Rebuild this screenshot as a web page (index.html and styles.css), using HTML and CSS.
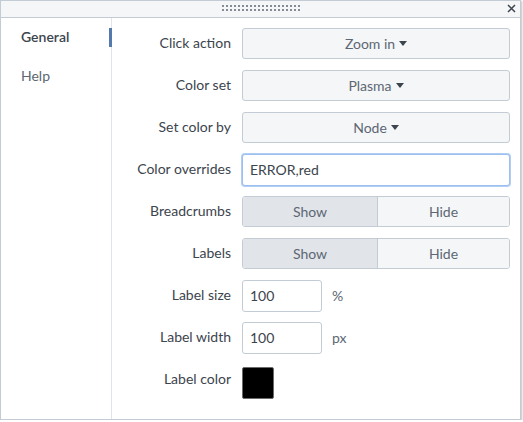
FILE: index.html
```html
<!DOCTYPE html>
<html>
<head>
<meta charset="utf-8">
<link rel="stylesheet" href="styles.css">
</head>
<body>
<div class="panel">
  <div class="header">
    <div class="grip"></div>
    <svg class="close" width="9" height="9" viewBox="0 0 9 9"><path d="M1 1L8 8M8 1L1 8" stroke="#3c444d" stroke-width="1.5" fill="none"/></svg>
  </div>
  <div class="main">
    <nav class="sidebar">
      <div class="nav-item active">General</div>
      <div class="nav-item">Help</div>
    </nav>
    <div class="form">
      <div class="label">Click action</div>
      <div class="control"><button class="dropdown">Zoom in <span class="caret"></span></button></div>

      <div class="label">Color set</div>
      <div class="control"><button class="dropdown">Plasma <span class="caret"></span></button></div>

      <div class="label">Set color by</div>
      <div class="control"><button class="dropdown">Node <span class="caret"></span></button></div>

      <div class="label">Color overrides</div>
      <div class="control"><div class="text-input wide focused">ERROR,red</div></div>

      <div class="label">Breadcrumbs</div>
      <div class="control"><div class="toggle"><span class="opt on">Show</span><span class="opt">Hide</span></div></div>

      <div class="label">Labels</div>
      <div class="control"><div class="toggle"><span class="opt on">Show</span><span class="opt">Hide</span></div></div>

      <div class="label">Label size</div>
      <div class="control"><div class="text-input small">100</div><span class="unit">%</span></div>

      <div class="label">Label width</div>
      <div class="control"><div class="text-input small">100</div><span class="unit">px</span></div>

      <div class="label top">Label color</div>
      <div class="control top"><div class="swatch"></div></div>
    </div>
  </div>
</div>
</body>
</html>
```

FILE: styles.css
```css
* { box-sizing: border-box; }
html, body { margin: 0; padding: 0; background: #ffffff; }
body {
  font-family: Lato, "Open Sans", sans-serif;
  font-size: 14px;
  color: #3c444d;
}
.panel {
  width: 521px;
  height: 420px;
  border: 1px solid #c3cbd4;
  box-shadow: 1px 1px 2px rgba(0, 0, 0, 0.25);
  display: flex;
  flex-direction: column;
  background: #fff;
}
.header {
  height: 17px;
  flex: none;
  background: #f5f6f8;
  border-bottom: 1px solid #c3cbd4;
  position: relative;
  display: flex;
  justify-content: center;
  align-items: flex-start;
}
.grip {
  margin-top: 4px;
  width: 78px;
  height: 6px;
  background: repeating-linear-gradient(90deg, #868b95 0 2px, transparent 2px 4px);
  -webkit-mask: repeating-linear-gradient(180deg, #000 0 2px, transparent 2px 4px);
  mask: repeating-linear-gradient(180deg, #000 0 2px, transparent 2px 4px);
}
.close {
  position: absolute;
  right: 4px;
  top: 3px;
}
.main {
  flex: 1;
  display: flex;
}
.sidebar {
  width: 111px;
  flex: none;
  border-right: 1px solid #e1e4e9;
  padding-top: 9px;
  display: flex;
  flex-direction: column;
  gap: 19px;
}
.nav-item {
  height: 20px;
  line-height: 20px;
  padding-left: 20px;
  color: #5c6773;
  position: relative;
}
.nav-item.active {
  color: #3c444d;
  font-weight: 600;
}
.nav-item.active::after {
  content: "";
  position: absolute;
  right: -1px;
  top: 1px;
  width: 3px;
  height: 19px;
  background: #5379af;
}
.form {
  padding-top: 10px;
  display: grid;
  grid-template-columns: 119px 268px;
  column-gap: 11px;
  row-gap: 11px;
  grid-auto-rows: 31px;
  align-content: start;
}
.label {
  text-align: right;
  line-height: 30px;
  white-space: nowrap;
  color: #3c444d;
}
.label.top { line-height: 30px; }
.control {
  display: flex;
  align-items: center;
}
.control.top { align-items: flex-start; }
.dropdown {
  width: 268px;
  height: 31px;
  border: 1px solid #c3cbd4;
  border-radius: 3px;
  background: #f5f6f8;
  font: inherit;
  color: #5c6773;
  display: flex;
  align-items: center;
  justify-content: center;
  gap: 4px;
  padding: 0;
}
.caret {
  width: 0;
  height: 0;
  border-left: 4px solid transparent;
  border-right: 4px solid transparent;
  border-top: 5px solid #3c444d;
}
.text-input {
  height: 31px;
  border: 1px solid #c3cbd4;
  border-radius: 3px;
  background: #fff;
  padding: 0 7px;
  line-height: 29px;
  color: #3c444d;
}
.text-input.wide { width: 268px; height: 32px; line-height: 30px; }
.text-input.small { width: 80px; height: 32px; line-height: 30px; }
.text-input.focused {
  border-color: #9dbff0;
  box-shadow: 0 0 0 1px #b3cef5;
}
.unit {
  margin-left: 10px;
  color: #5c6773;
}
.toggle {
  width: 268px;
  height: 31px;
  border: 1px solid #c3cbd4;
  border-radius: 3px;
  display: flex;
  overflow: hidden;
}
.opt {
  flex: 1;
  display: flex;
  align-items: center;
  justify-content: center;
  background: #f5f6f8;
  color: #5c6773;
}
.opt.on {
  flex: none;
  width: 135px;
  background: #e1e4e9;
  border-right: 1px solid #c3cbd4;
}
.swatch {
  width: 32px;
  height: 32px;
  margin-top: 3px;
  background: #000;
  border: 1px solid #6b6b6b;
  border-radius: 2px;
}
```
